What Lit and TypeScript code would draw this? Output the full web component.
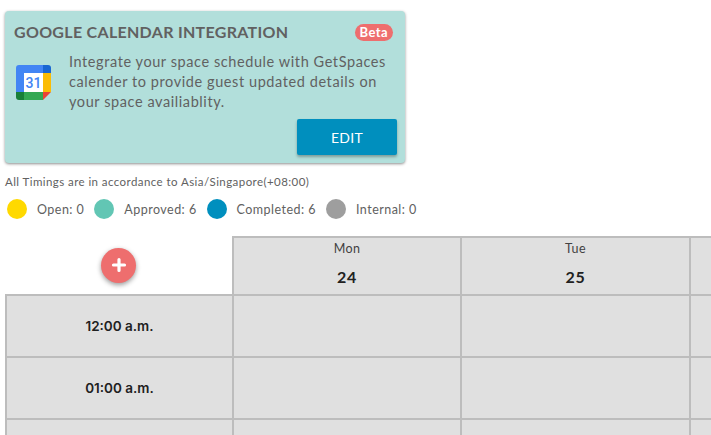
import {LitElement, html, css} from 'lit';
import {customElement} from 'lit/decorators.js';

const LEGEND = [
  {label: 'Open: 0', color: '#ffd900'},
  {label: 'Approved: 6', color: '#62c6b4'},
  {label: 'Completed: 6', color: '#008fbe'},
  {label: 'Internal: 0', color: '#9e9e9e'},
];

const DAYS = [
  {name: 'Mon', date: '24'},
  {name: 'Tue', date: '25'},
  {name: '', date: ''},
];

const TIMES = ['12:00 a.m.', '01:00 a.m.', ''];

@customElement('app-root')
export class AppRoot extends LitElement {
  static styles = css`
    :host {
      display: block;
      height: 435px;
      overflow: hidden;
      background: #fff;
      font-family: 'Lato', 'Noto Sans', sans-serif;
      color: #616161;
    }

    .card {
      box-sizing: border-box;
      width: 400px;
      height: 152px;
      margin: 11px 0 0 5px;
      padding: 10px 8px 0 9px;
      border-radius: 4px;
      background: #b2dfdb;
      box-shadow: 0 1px 3px rgba(0, 0, 0, 0.45);
    }

    .card-head {
      display: flex;
      justify-content: space-between;
      align-items: center;
      height: 20px;
    }

    .card-title {
      font-size: 16px;
      font-weight: 700;
      letter-spacing: 0.3px;
    }

    .beta {
      margin: 3px 4px 0 0;
      padding: 0 5px;
      height: 17px;
      line-height: 17px;
      border-radius: 9px;
      background: #ee6e6e;
      color: #fff;
      font-size: 13px;
      font-weight: 700;
      letter-spacing: 0.4px;
    }

    .card-body {
      display: flex;
      align-items: center;
      gap: 18px;
      margin-top: 11px;
      padding-left: 2px;
    }

    .card-body svg {
      flex: none;
    }

    .card-text {
      font-size: 14.5px;
      line-height: 20px;
      letter-spacing: 0.58px;
      white-space: nowrap;
    }

    .card-actions {
      display: flex;
      justify-content: flex-end;
      margin-top: 7px;
    }

    .edit {
      width: 100px;
      height: 36px;
      border: none;
      border-radius: 2px;
      background: #008fbe;
      color: #fff;
      font: 400 14px 'Lato', sans-serif;
      letter-spacing: 0.3px;
      box-shadow: 0 2px 3px rgba(0, 0, 0, 0.3);
    }

    .zone {
      margin: 12px 0 0 5px;
      font-size: 11.5px;
      line-height: 14px;
      letter-spacing: 0.43px;
    }

    .legend {
      display: flex;
      align-items: center;
      height: 22px;
      margin: 9px 0 0 7px;
      font-size: 12.5px;
      letter-spacing: 0.47px;
    }

    .legend-item {
      display: flex;
      align-items: center;
      gap: 10px;
      margin-right: 10px;
    }

    .dot {
      width: 20px;
      height: 20px;
      border-radius: 50%;
    }

    .grid {
      display: grid;
      grid-template-columns: 229px 228px 229px 228px;
      grid-template-rows: 60px;
      grid-auto-rows: 62px;
      margin: 16px 0 0 5px;
      width: 914px;
    }

    .corner {
      box-sizing: border-box;
      display: flex;
      justify-content: center;
      align-items: center;
      padding-right: 2px;
      border-bottom: 2px solid #bdbdbd;
    }

    .add {
      display: flex;
      justify-content: center;
      align-items: center;
      width: 35px;
      height: 35px;
      border-radius: 50%;
      background: #ee6e6e;
      box-shadow: 0 2px 5px rgba(0, 0, 0, 0.4);
    }

    .cell {
      box-sizing: border-box;
      border-right: 2px solid #bdbdbd;
      border-bottom: 2px solid #bdbdbd;
      background: #e0e0e0;
    }

    .day {
      border-top: 2px solid #bdbdbd;
      text-align: center;
      color: #424242;
    }

    .day:nth-child(2) {
      margin-left: -2px;
      border-left: 2px solid #bdbdbd;
    }

    .day-name {
      margin-top: 3px;
      font-size: 12.5px;
      line-height: 16px;
      letter-spacing: 0.4px;
    }

    .day-date {
      margin-top: 10px;
      font-size: 16px;
      line-height: 20px;
      font-weight: 700;
      letter-spacing: 0.8px;
      color: #212121;
    }

    .time {
      display: flex;
      justify-content: center;
      align-items: center;
      border-left: 2px solid #bdbdbd;
      font: 600 13.5px 'Inter', sans-serif;
      color: #212121;
    }
  `;

  render() {
    return html`
      <div class="card">
        <div class="card-head">
          <span class="card-title">GOOGLE CALENDAR INTEGRATION</span>
          <span class="beta">Beta</span>
        </div>
        <div class="card-body">
          ${this.renderLogo()}
          <div class="card-text">
            Integrate your space schedule with GetSpaces<br />
            calender to provide guest updated details on<br />
            your space availiablity.
          </div>
        </div>
        <div class="card-actions"><button class="edit">EDIT</button></div>
      </div>
      <div class="zone">All Timings are in accordance to Asia/Singapore(+08:00)</div>
      <div class="legend">
        ${LEGEND.map(
          (item) => html`
            <div class="legend-item">
              <span class="dot" style="background:${item.color}"></span>
              <span>${item.label}</span>
            </div>
          `
        )}
      </div>
      <div class="grid">
        <div class="corner">
          <div class="add">
            <svg width="16" height="16" viewBox="0 0 16 16">
              <path d="M8 2.5v11M2.5 8h11" stroke="#fff" stroke-width="3.2" stroke-linecap="round" />
            </svg>
          </div>
        </div>
        ${DAYS.map(
          (day) => html`
            <div class="cell day">
              <div class="day-name">${day.name}</div>
              <div class="day-date">${day.date}</div>
            </div>
          `
        )}
        ${TIMES.map(
          (time) => html`
            <div class="cell time">${time}</div>
            ${DAYS.map(() => html`<div class="cell"></div>`)}
          `
        )}
      </div>
    `;
  }

  renderLogo() {
    return html`
      <svg width="35" height="35" viewBox="0 0 35 35">
        <path d="M3 0h24v8H8v19H0V3a3 3 0 0 1 3-3z" fill="#4285f4" />
        <path d="M27 0h5a3 3 0 0 1 3 3v5h-8z" fill="#1967d2" />
        <rect x="27" y="8" width="8" height="19" fill="#fbbc04" />
        <path d="M8 27h19v8H8z" fill="#34a853" />
        <path d="M0 27h8v8H3a3 3 0 0 1-3-3z" fill="#188038" />
        <path d="M27 27h8l-8 8z" fill="#ea4335" />
        <rect x="8" y="8" width="19" height="19" fill="#fff" />
        <text x="17.5" y="22.5" text-anchor="middle" font-family="Roboto, sans-serif" font-size="14" font-weight="500" fill="#4285f4">31</text>
      </svg>
    `;
  }
}
